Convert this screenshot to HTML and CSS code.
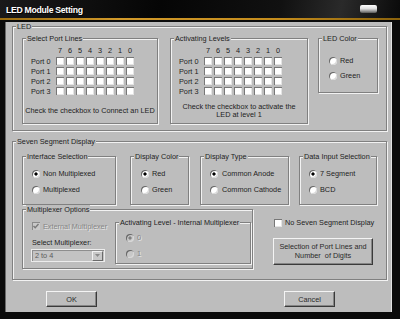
FILE: index.html
```html
<!DOCTYPE html>
<html>
<head>
<meta charset="utf-8">
<link rel="stylesheet" href="styles.css">
</head>
<body>
<div class="window">
  <div class="titlebar"><span class="title">LED Module Setting</span><span class="close"></span></div>
  <div class="goldline"></div>
  <div class="client">
    <div class="group g-led">
      <span class="legend">LED</span>
      <div class="group g-ports">
        <span class="legend">Select Port Lines</span>
        <div class="grow head"><span class="plabel"></span><span class="cells"><span>7</span><span>6</span><span>5</span><span>4</span><span>3</span><span>2</span><span>1</span><span>0</span></span></div>
        <div class="grow"><span class="plabel">Port 0</span><span class="cells"><i class="cb"></i><i class="cb"></i><i class="cb"></i><i class="cb"></i><i class="cb"></i><i class="cb"></i><i class="cb"></i><i class="cb"></i></span></div>
        <div class="grow"><span class="plabel">Port 1</span><span class="cells"><i class="cb"></i><i class="cb"></i><i class="cb"></i><i class="cb"></i><i class="cb"></i><i class="cb"></i><i class="cb"></i><i class="cb"></i></span></div>
        <div class="grow"><span class="plabel">Port 2</span><span class="cells"><i class="cb"></i><i class="cb"></i><i class="cb"></i><i class="cb"></i><i class="cb"></i><i class="cb"></i><i class="cb"></i><i class="cb"></i></span></div>
        <div class="grow"><span class="plabel">Port 3</span><span class="cells"><i class="cb"></i><i class="cb"></i><i class="cb"></i><i class="cb"></i><i class="cb"></i><i class="cb"></i><i class="cb"></i><i class="cb"></i></span></div>
        <div class="note">Check the checkbox to Connect an LED</div>
      </div>
      <div class="group g-act">
        <span class="legend">Activating Levels</span>
        <div class="grow head"><span class="plabel"></span><span class="cells"><span>7</span><span>6</span><span>5</span><span>4</span><span>3</span><span>2</span><span>1</span><span>0</span></span></div>
        <div class="grow"><span class="plabel">Port 0</span><span class="cells"><i class="cb"></i><i class="cb"></i><i class="cb"></i><i class="cb"></i><i class="cb"></i><i class="cb"></i><i class="cb"></i><i class="cb"></i></span></div>
        <div class="grow"><span class="plabel">Port 1</span><span class="cells"><i class="cb"></i><i class="cb"></i><i class="cb"></i><i class="cb"></i><i class="cb"></i><i class="cb"></i><i class="cb"></i><i class="cb"></i></span></div>
        <div class="grow"><span class="plabel">Port 2</span><span class="cells"><i class="cb"></i><i class="cb"></i><i class="cb"></i><i class="cb"></i><i class="cb"></i><i class="cb"></i><i class="cb"></i><i class="cb"></i></span></div>
        <div class="grow"><span class="plabel">Port 3</span><span class="cells"><i class="cb"></i><i class="cb"></i><i class="cb"></i><i class="cb"></i><i class="cb"></i><i class="cb"></i><i class="cb"></i><i class="cb"></i></span></div>
        <div class="note">Check the checkbox to activate the<br>LED at level 1</div>
      </div>
      <div class="group g-ledcolor">
        <span class="legend">LED Color</span>
        <div class="stack s-led">
          <div class="rrow"><i class="rb"></i><span>Red</span></div>
          <div class="rrow"><i class="rb"></i><span>Green</span></div>
        </div>
      </div>
    </div>

    <div class="group g-seg">
      <span class="legend">Seven Segment Display</span>
      <div class="row1">
        <div class="group g-small g-if">
          <span class="legend">Interface Selection</span>
          <div class="stack">
            <div class="rrow"><i class="rb on"></i><span>Non Multiplexed</span></div>
            <div class="rrow"><i class="rb"></i><span>Multiplexed</span></div>
          </div>
        </div>
        <div class="group g-small g-dc">
          <span class="legend">Display Color</span>
          <div class="stack">
            <div class="rrow"><i class="rb on"></i><span>Red</span></div>
            <div class="rrow"><i class="rb"></i><span>Green</span></div>
          </div>
        </div>
        <div class="group g-small g-dt">
          <span class="legend">Display Type</span>
          <div class="stack">
            <div class="rrow wide"><i class="rb on"></i><span>Common Anode</span></div>
            <div class="rrow wide"><i class="rb"></i><span>Common Cathode</span></div>
          </div>
        </div>
        <div class="group g-small g-di">
          <span class="legend">Data Input Selection</span>
          <div class="stack">
            <div class="rrow"><i class="rb on"></i><span>7 Segment</span></div>
            <div class="rrow"><i class="rb"></i><span>BCD</span></div>
          </div>
        </div>
      </div>
      <div class="row2">
        <div class="group g-mux">
          <span class="legend">Multiplexer Options</span>
          <div class="mux-left">
            <div class="chkrow"><i class="cb cb-dis"><svg width="8" height="8" viewBox="0 0 8 8"><polyline points="1.5,4 3.2,5.8 6.5,2" fill="none" stroke="#7a7a7a" stroke-width="1.4"/></svg></i><span class="dis">External Multiplexer</span></div>
            <div class="sel-label">Select Multiplexer:</div>
            <div class="select"><span class="sel-text">2 to 4</span><span class="dd"><svg width="9" height="9" viewBox="0 0 9 9"><polygon points="2,3 7,3 4.5,6" fill="#8a8a8a"/></svg></span></div>
          </div>
          <div class="group g-actint">
            <span class="legend">Activating Level - Internal Multiplexer</span>
            <div class="stack">
              <div class="rrow"><i class="rb rb-dis on"></i><span class="dis">0</span></div>
              <div class="rrow"><i class="rb rb-dis"></i><span class="dis">1</span></div>
            </div>
          </div>
        </div>
        <div class="right-col">
          <div class="chkrow nss"><i class="cb"></i><span>No Seven Segment Display</span></div>
          <div class="btn bigbtn">Selection of Port Lines and<br>Number&nbsp; of Digits</div>
        </div>
      </div>
    </div>

    <div class="btns">
      <div class="btn okbtn">OK</div>
      <div class="btn cancelbtn">Cancel</div>
    </div>
  </div>
</div>
</body>
</html>
```

FILE: styles.css
```css
* { box-sizing: border-box; }
body {
  margin: 0;
  background: #000;
  font-family: "Liberation Sans", Arial, sans-serif;
  font-size: 7.3px;
  color: #1e1e1e;
}
.window {
  width: 400px;
  height: 319px;
  background: #0b0b0b;
  display: flex;
  flex-direction: column;
  overflow: hidden;
}
.titlebar {
  height: 18px;
  display: flex;
  align-items: flex-start;
  padding: 5px 0 0 6px;
  background: linear-gradient(100deg, #1a1a1a 0%, #050505 40%, #111 70%, #2a2a2a 85%, #0a0a0a 100%);
}
.title {
  font-weight: bold;
  font-size: 8.7px;
  line-height: 10px;
  color: #fff;
  letter-spacing: -0.3px;
  text-shadow: 1px 1px 0 #000;
}
.close {
  margin-left: auto;
  margin-right: 23px;
  margin-top: 0;
  width: 17px;
  height: 8px;
  border-radius: 2px;
  background: linear-gradient(#ffffff, #e0e0e0 45%, #9a9a9a 75%, #555);
}
.goldline {
  height: 2px;
  background: linear-gradient(90deg, #9c6e10, #d29a2a 30%, #c48c1c 70%, #8a620c);
  margin-bottom: 2px;
}
.client {
  margin: 0 8px 0 5px;
  height: 290px;
  background: #bdbdbd;
  padding: 4px 0 0 7px;
  border-right: 1px solid #e2e2e2;
  border-left: 1px solid #6a6a6a;
}
.group {
  position: relative;
  border: 1px solid #808080;
  box-shadow: inset 1px 1px 0 #f2f2f2, 1px 1px 0 #f2f2f2;
  flex: none;
}
.legend {
  position: absolute;
  top: -5px;
  left: 3px;
  padding: 0 1px;
  line-height: 9px;
  background: #bdbdbd;
  white-space: nowrap;
}
.g-led {
  width: 375px;
  height: 105px;
  margin-left: -1px;
  display: flex;
  align-items: flex-start;
  padding: 11px 0 0 9px;
}
.g-ports, .g-act {
  height: 86px;
  padding: 7px 0 0 8px;
}
.g-ports { width: 136px; }
.g-act { width: 138px; margin-left: 12px; }
.g-ledcolor {
  width: 60px;
  height: 55px;
  margin-left: 10px;
  padding: 17px 0 0 10px;
}
.grow {
  display: flex;
  align-items: center;
  height: 10px;
}
.grow.head {
  height: 8px;
  margin-bottom: 2px;
}
.plabel { width: 25px; flex: none; }
.cells { display: flex; gap: 2px; }
.cells span { width: 8px; text-align: center; }
.cb {
  display: block;
  width: 8px;
  height: 8px;
  flex: none;
  background: #fff;
  box-shadow: inset 1px 1px 0 #777, inset -1px -1px 0 #e4e4e4;
}
.cb svg { display: block; }
.cb-dis { background: #c9c9c9; box-shadow: inset 1px 1px 0 #8a8a8a; }
.note {
  height: 22px;
  margin: 4px 0 0 -8px;
  display: flex;
  align-items: center;
  justify-content: center;
  text-align: center;
  line-height: 8.5px;
}
.stack {
  display: flex;
  flex-direction: column;
  gap: 7px;
}
.s-led { gap: 6px; }
.rrow {
  display: flex;
  align-items: center;
  height: 9px;
  gap: 3px;
  white-space: nowrap;
}
.rrow.wide { gap: 4px; }
.rb {
  display: block;
  width: 8px;
  height: 8px;
  flex: none;
  border-radius: 50%;
  background: #fff;
  box-shadow: inset 1px 1px 0 #666, inset -1px -1px 0 #d8d8d8;
}
.rb.on {
  background: radial-gradient(circle at 50% 50%, #000 0, #000 1.3px, #fff 1.9px);
}
.rb-dis { background: #c8c8c8; }
.rb-dis.on {
  background: radial-gradient(circle at 50% 50%, #808080 0, #808080 1.3px, #c8c8c8 1.9px);
}
.dis {
  color: #868686;
  text-shadow: 1px 1px 0 #e6e6e6;
}
.g-seg {
  width: 375px;
  height: 139px;
  margin: 10px 0 0 -1px;
  padding: 14px 0 0 9px;
}
.row1 {
  display: flex;
  align-items: flex-start;
}
.g-small {
  height: 49px;
  padding: 12px 0 0 9px;
}
.g-if { width: 94px; }
.g-dc { width: 59px; margin-left: 14px; padding-left: 10px; }
.g-dt { width: 89px; margin-left: 11px; }
.g-di { width: 78px; margin-left: 10px; }
.row2 {
  display: flex;
  align-items: flex-start;
  margin-top: 4px;
}
.g-mux {
  width: 231px;
  height: 60px;
  display: flex;
  align-items: flex-start;
  padding: 12px 0 0 8px;
}
.mux-left {
  display: flex;
  flex-direction: column;
}
.chkrow {
  display: flex;
  align-items: center;
  height: 8px;
  gap: 3px;
  padding-left: 1px;
  white-space: nowrap;
}
.sel-label {
  line-height: 9px;
  margin-top: 8px;
  padding-left: 1px;
}
.select {
  width: 74px;
  height: 13px;
  margin-top: 2px;
  display: flex;
  align-items: center;
  border: 1px solid #ececec;
  box-shadow: inset 1px 1px 0 #8e8e8e;
  background: #c3c3c3;
}
.sel-text {
  padding-left: 3px;
  color: #5a5a5a;
}
.dd {
  margin-left: auto;
  margin-right: 1px;
  width: 11px;
  height: 10px;
  display: flex;
  align-items: center;
  justify-content: center;
  background: #c8c8c8;
  border: 1px solid;
  border-color: #f2f2f2 #6a6a6a #6a6a6a #f2f2f2;
}
.dd svg { display: block; }
.g-actint {
  width: 136px;
  height: 42px;
  margin-left: auto;
  margin-right: 1px;
  padding: 10px 0 0 10px;
}
.right-col {
  margin-left: 20px;
  display: flex;
  flex-direction: column;
  padding-top: 9px;
}
.nss { height: 9px; }
.btn {
  background: #bdbdbd;
  border: 1px solid;
  border-color: #f4f4f4 #3a3a3a #3a3a3a #f4f4f4;
  box-shadow: inset -1px -1px 0 #858585;
  display: flex;
  align-items: center;
  justify-content: center;
  text-align: center;
  color: #2a2a2a;
}
.bigbtn {
  width: 100px;
  height: 27px;
  margin-top: 11px;
  line-height: 8.5px;
}
.btns {
  display: flex;
  margin-top: 11px;
  padding-left: 33px;
}
.okbtn, .cancelbtn {
  width: 51px;
  height: 16px;
}
.cancelbtn { margin-left: 187px; }
```
